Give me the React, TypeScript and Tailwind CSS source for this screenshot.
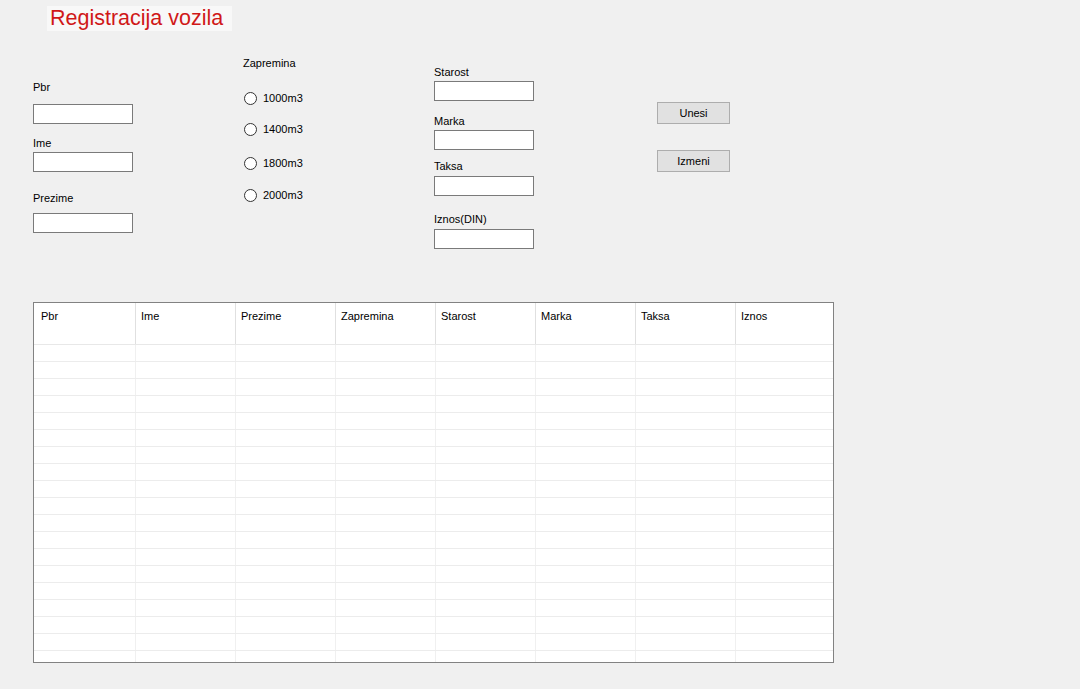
const columns = ["Pbr", "Ime", "Prezime", "Zapremina", "Starost", "Marka", "Taksa", "Iznos"]
const rows = Array.from({length: 19}, (_, i) => i)

function TextBox({className = ""}: {className?: string}) {
    return <div className={`w-[100px] h-[20px] bg-white border border-[#7a7a7a] ${className}`} />
}

function Label({text, className = ""}: {text: string, className?: string}) {
    return <div className={`leading-[13px] h-[13px] ${className}`}>{text}</div>
}

function Radio({text, className = ""}: {text: string, className?: string}) {
    return (
        <div className={`flex items-center h-[16px] ${className}`}>
            <div className="w-[13px] h-[13px] ml-[1px] rounded-full border border-[#333333] bg-white" />
            <span className="ml-[6px] leading-[13px]">{text}</span>
        </div>
    )
}

function Button({text, className = ""}: {text: string, className?: string}) {
    return (
        <div className={`w-[73px] h-[22px] bg-[#e1e1e1] border border-[#adadad] flex items-center justify-center leading-[13px] ${className}`}>
            {text}
        </div>
    )
}

export default function App() {
    return (
        <div className="w-[1080px] h-[689px] bg-[#f0f0f0] text-[11px] text-black overflow-hidden" style={{fontFamily: '"Liberation Sans", Arial, sans-serif'}}>
            <div className="ml-[47px] pt-[6px]">
                <div className="w-[185px] h-[25px] bg-[#f8f8f8] flex items-center pl-[3px] text-[21.5px] leading-[25px] text-[#d01818]">
                    Registracija vozila
                </div>
            </div>

            <div className="flex flex-row pl-[33px] h-[271px]">
                <div className="w-[210px] flex flex-col">
                    <Label text="Pbr" className="mt-[50px]" />
                    <TextBox className="mt-[10px]" />
                    <Label text="Ime" className="mt-[13px]" />
                    <TextBox className="mt-[2px]" />
                    <Label text="Prezime" className="mt-[20px]" />
                    <TextBox className="mt-[8px]" />
                </div>
                <div className="w-[191px] flex flex-col">
                    <Label text="Zapremina" className="mt-[26px]" />
                    <Radio text="1000m3" className="mt-[20px]" />
                    <Radio text="1400m3" className="mt-[15px]" />
                    <Radio text="1800m3" className="mt-[18px]" />
                    <Radio text="2000m3" className="mt-[16px]" />
                </div>
                <div className="w-[223px] flex flex-col">
                    <Label text="Starost" className="mt-[35px]" />
                    <TextBox className="mt-[2px]" />
                    <Label text="Marka" className="mt-[14px]" />
                    <TextBox className="mt-[2px]" />
                    <Label text="Taksa" className="mt-[10px]" />
                    <TextBox className="mt-[3px]" />
                    <Label text="Iznos(DIN)" className="mt-[17px]" />
                    <TextBox className="mt-[3px]" />
                </div>
                <div className="flex flex-col">
                    <Button text="Unesi" className="mt-[71px]" />
                    <Button text="Izmeni" className="mt-[26px]" />
                </div>
            </div>

            <div className="ml-[33px] w-[801px] h-[361px] bg-white border border-[#828282] overflow-hidden">
                <div className="flex flex-row h-[42px] border-b border-[#e8e8e8]">
                    {columns.map((c, i) => (
                        <div
                            key={c}
                            className={`${i === 0 ? "w-[102px] pl-[7px]" : i === 7 ? "flex-1 pl-[5px]" : "w-[100px] pl-[5px]"} ${i < 7 ? "border-r border-[#e0e0e0]" : ""} pt-[7px] leading-[13px]`}
                        >
                            {c}
                        </div>
                    ))}
                </div>
                {rows.map(r => (
                    <div key={r} className="flex flex-row h-[17px] border-b border-[#ececec]">
                        {columns.map((c, i) => (
                            <div
                                key={c}
                                className={`${i === 0 ? "w-[102px]" : i === 7 ? "flex-1" : "w-[100px]"} ${i < 7 ? "border-r border-[#f0f0f0]" : ""}`}
                            />
                        ))}
                    </div>
                ))}
            </div>
        </div>
    )
}
